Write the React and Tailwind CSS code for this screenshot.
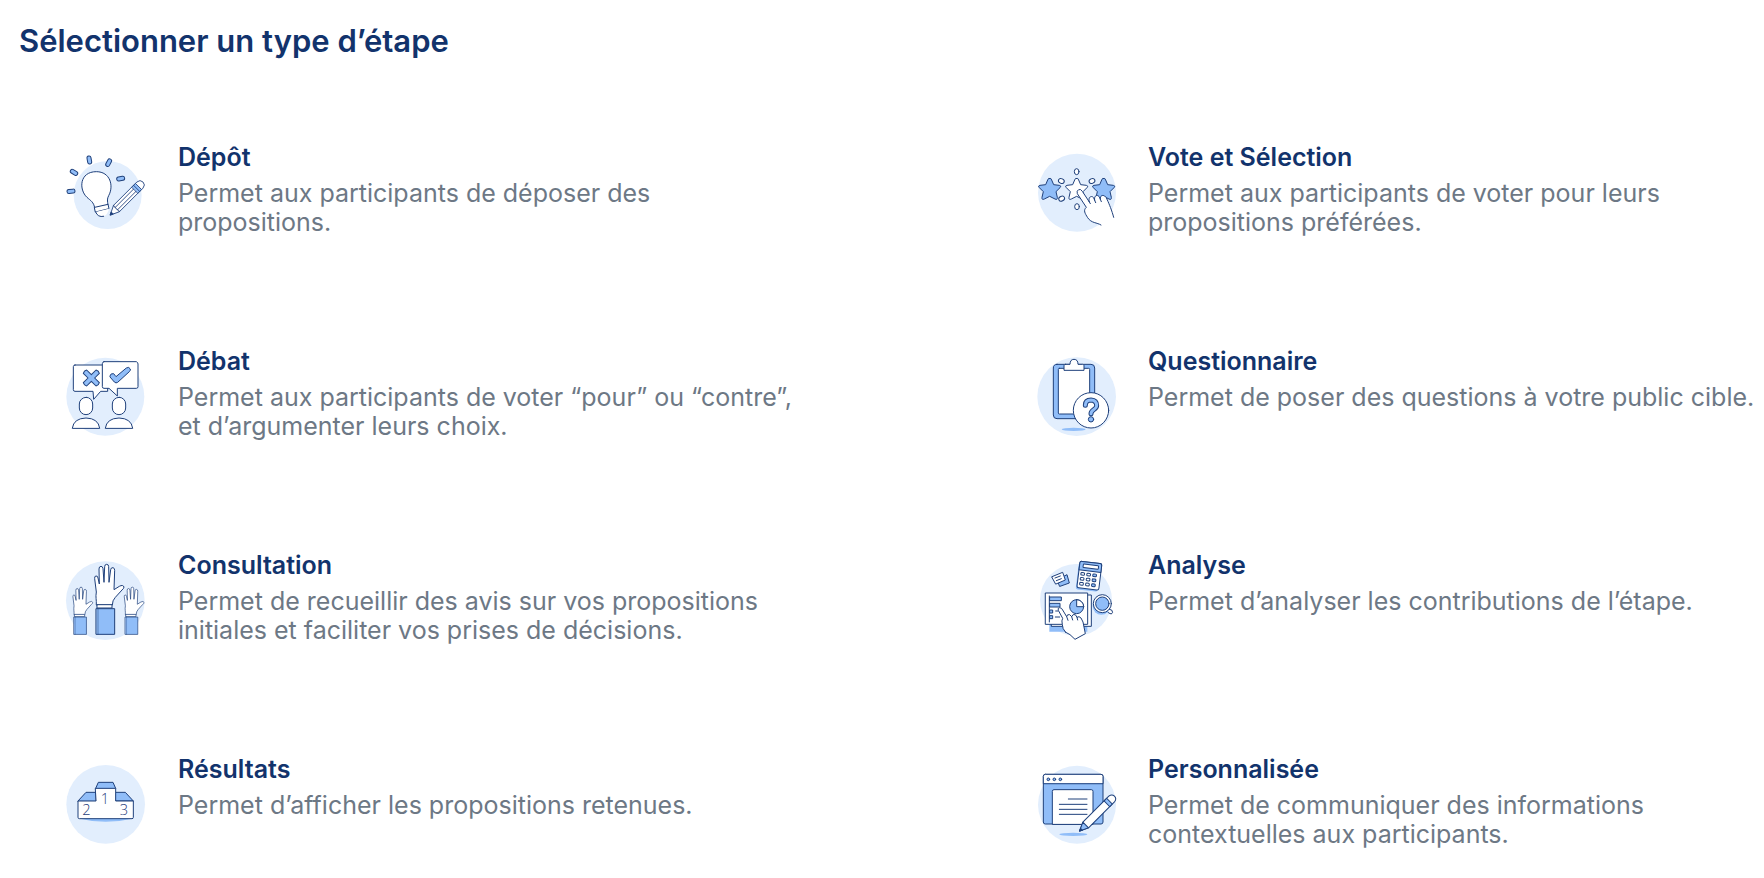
import React from "react";

const DARK = "#1f407b";
const MID = "#90bdf8";
const PALE = "#e2eefd";

function Drawing({ children }) {
  return (
    <svg
      viewBox="0 0 300 288"
      aria-hidden="true"
      className="mt-1 h-24 w-[100px] shrink-0"
      fill="#ffffff"
      stroke={DARK}
      strokeWidth="3"
      strokeLinecap="round"
      strokeLinejoin="round"
    >
      {children}
    </svg>
  );
}

const Spark = ({ x, y, angle }) => (
  <rect x={-12} y={-6} width="24" height="12" rx="6" fill={MID} transform={`translate(${x} ${y}) rotate(${angle})`} />
);

function IdeaIcon() {
  return (
    <Drawing>
      <circle cx="155" cy="153" r="102" fill={PALE} stroke="none" />
      <Spark x={100} y={48} angle={80} />
      <Spark x={158} y={56} angle={-62} />
      <Spark x={54} y={85} angle={32} />
      <Spark x={194} y={104} angle={-10} />
      <Spark x={45} y={142} angle={-6} />
      <path d="M116 191C113 174 104 170 93 160C68 137 70 83 121 83C163 83 174 126 158 155C153 164 154 171 156 182Z" />
      <path d="M116 190L156 181L159 194L119 204Z" />
      <path d="M119 204Q125 221 143 217Q155 212 159 194" stroke="none" />
      <path d="M119 204Q125 221 143 217" fill="none" />
      <g transform="translate(162 213) rotate(-45)" strokeWidth="2.5">
        <path d="M1 0L28-13H127Q140-12 140 0Q140 12 127 13H28Z" />
        <path d="M1 0L9-4V4Z" fill={DARK} />
        <path d="M28-13Q24-9 28-5Q24 0 28 5Q24 9 28 13M28-5H106M28 5H106" fill="none" />
        <path d="M106-13H121V13H106Z" fill={MID} />
        <path d="M113-13V13" />
      </g>
    </Drawing>
  );
}

const STAR = "M0-32Q4-34 6-27L12-13L29-11Q37-9 31-4L19 8L23 25Q24 34 16 30L0 22L-16 30Q-24 34-23 25L-19 8L-31-4Q-37-9-29-11L-12-13L-6-27Q-4-34 0-32Z";

function VoteIcon() {
  return (
    <Drawing>
      <circle cx="153" cy="146" r="117" fill={PALE} stroke="none" />
      <path d={STAR} transform="translate(71 135)" fill={MID} />
      <path d={STAR} transform="translate(152 135)" />
      <path d={STAR} transform="translate(233 135)" fill={MID} />
      <ellipse cx="152" cy="83" rx="7" ry="9" />
      <ellipse cx="153" cy="188" rx="7" ry="9" />
      <ellipse cx="106" cy="111" rx="9" ry="7" transform="rotate(25 106 111)" />
      <ellipse cx="198" cy="111" rx="9" ry="7" transform="rotate(-25 198 111)" />
      <ellipse cx="107" cy="164" rx="9" ry="7" transform="rotate(-25 107 164)" />
      <path
        d="M225 243C213 235 196 238 185 221C177 208 171 199 181 190L154 149Q151 140 158 137Q164 134 169 142L190 174C187 162 192 156 199 158Q204 160 206 169C204 157 210 153 216 155Q221 157 223 166C222 155 229 152 236 156Q241 159 244 168C249 179 258 200 263 220"
      />
      <path d="M190 174L193 179M206 169L209 176M223 166L226 173" fill="none" />
    </Drawing>
  );
}

const Person = ({ x }) => (
  <g transform={`translate(${x} 0)`}>
    <rect x="-20" y="148" width="40" height="52" rx="20" />
    <path d="M-41 240Q-37 211 0 210Q37 211 41 240Z" />
  </g>
);

function DebateIcon() {
  return (
    <Drawing>
      <circle cx="148" cy="146" r="117" fill={PALE} stroke="none" />
      <path d="M57 51H150Q155 51 155 56V130H134L113 154L111 130H57Q52 130 52 125V56Q52 51 57 51Z" />
      <g transform="translate(106 90) rotate(45)">
        <path
          d="M-7-27Q0-31 7-27V-7H27Q31 0 27 7H7V27Q0 31-7 27V7H-27Q-31 0-27-7H-7Z"
          fill={MID}
        />
      </g>
      <path d="M144 41H241Q246 43 246 48V116Q246 121 241 121H184V144L159 121H144Q139 121 139 116V47Q139 42 144 41Z" />
      <path
        d="M162 83Q164 75 173 77L180 86L211 60Q219 55 223 63Q224 67 220 71L185 103Q180 107 175 102L163 88Z"
        fill={MID}
      />
      <Person x={90} />
      <Person x={189} />
    </Drawing>
  );
}

function SurveyIcon() {
  return (
    <Drawing>
      <circle cx="152" cy="146" r="118" fill={PALE} stroke="none" />
      <ellipse cx="143" cy="244" rx="36" ry="5" fill={MID} stroke="none" />
      <rect x="82" y="49" width="124" height="163" rx="11" fill={MID} />
      <rect x="97" y="61" width="94" height="137" rx="3" />
      <path d="M118 49H132C132 39 136 34 144 34C152 34 156 39 156 49H170Q174 49 174 53V67H114V53Q114 49 118 49Z" />
      <circle cx="195" cy="187" r="53" />
      <path d="M178 172Q178 156 195 156Q212 157 212 173C212 185 195 184 195 197" fill="none" strokeWidth="15" />
      <path d="M178 172Q178 156 195 156Q212 157 212 173C212 185 195 184 195 197" fill="none" stroke={MID} strokeWidth="9" />
      <circle cx="195" cy="214" r="8" fill={MID} />
    </Drawing>
  );
}

const HAND =
  "M121 158C122 142 118 137 121 120L116 80Q115 72 120 72Q125 71 126 78L130 96L129 51Q129 43 135 43Q140 43 141 50L144 91L146 44Q146 37 152 37Q158 37 158 44L159 91L164 53Q165 46 171 47Q176 48 176 55L174 113L190 103Q201 97 204 105Q204 109 198 114L178 136Q169 145 169 158Z";

const RaisedHand = () => (
  <>
    <path d={HAND} />
    <path d="M124 158H168V168H124Z" />
    <path d="M121 170H176V247H121Z" fill={MID} />
    <path d="M126 170V247" strokeWidth="1.5" />
  </>
);

function HandsIcon() {
  return (
    <Drawing>
      <circle cx="148" cy="146" r="118" fill={PALE} stroke="none" />
      <g transform="translate(-27.5 80.5) scale(.675)">
        <RaisedHand />
      </g>
      <g transform="translate(126.5 80.5) scale(.675)">
        <RaisedHand />
      </g>
      <RaisedHand />
    </Drawing>
  );
}

function AnalysisIcon() {
  const keys = [0, 1, 2].flatMap((r) => [0, 1, 2].map((c) => [r, c]));
  return (
    <Drawing>
      <circle cx="150" cy="144" r="108" fill={PALE} stroke="none" />
      <g transform="rotate(7 189 72)">
        <rect x="154" y="36" width="66" height="80" rx="6" fill={MID} stroke="none" />
        <rect x="157" y="31" width="66" height="80" rx="6" />
        <path d="M157 57V37Q157 31 163 31H217Q223 31 223 37V57Z" fill={MID} />
        <rect x="168" y="38" width="46" height="11" rx="2" />
        {keys.map(([r, c]) => (
          <rect
            key={`${r}-${c}`}
            x={164 + c * 18}
            y={64 + r * 15}
            width="11"
            height="8"
            rx="3"
            fill={c === 2 ? MID : "#ffffff"}
          />
        ))}
      </g>
      <path d="M94 83L123 68L130 93L102 103Z" fill={MID} />
      <path d="M78 74L110 61L118 84L90 96Z" />
      <path d="M87 78L103 72M91 86L106 80" />
      <path d="M70 217V239H184V217" fill={MID} stroke="none" />
      <path d="M77 129H196V223H77Z" />
      <path d="M59 123H185V217H59Z" />
      <path d="M70 132V210" />
      <rect x="72" y="135" width="34" height="11" fill={MID} />
      <rect x="72" y="154" width="30" height="11" fill={MID} />
      <path d="M72 174H80V183H72ZM72 191H80V200H72Z" fill={MID} />
      <path d="M89 177H96M88 195H101" />
      <circle cx="152" cy="164" r="21" fill={MID} />
      <path d="M152 143V164H173A21 21 0 0 0 152 143Z" />
      <path d="M242 175Q248 169 257 174Q263 182 256 186Q247 186 242 175Z" />
      <circle cx="226" cy="162" r="26" fill={MID} stroke="none" />
      <circle cx="229" cy="155" r="27" />
      <circle cx="229" cy="155" r="20" fill={MID} />
      <path d="M118 240Q109 230 109 218Q106 205 110 199L97 175Q94 168 101 167Q107 167 110 174L122 194Q123 186 131 188L137 194Q140 185 148 188L153 196Q159 191 165 198L171 210L178 245L147 262Q132 245 118 240Z" />
      <path d="M122 194L126 205M137 194L140 204M153 196L155 204" fill="none" />
    </Drawing>
  );
}

function PodiumIcon() {
  return (
    <Drawing>
      <circle cx="149" cy="145" r="118" fill={PALE} stroke="none" />
      <path d="M72 188Q148 207 228 188Z" fill={MID} stroke="none" />
      <path d="M66 135L90 109H119V135ZM179 109H208L232 135H179Z" fill={MID} />
      <path d="M119 97L127 79H171L179 97Z" fill={MID} />
      <path d="M119 97H179V135H232V184Q232 188 228 188H70Q66 188 66 184V135H119Z" />
      <g
        className="font-['Open_Sans',sans-serif] text-[44px] font-light"
        fill={DARK}
        stroke="none"
        textAnchor="middle"
      >
        <text x="147" y="143">1</text>
        <text x="91" y="177">2</text>
        <text x="204" y="178">3</text>
      </g>
    </Drawing>
  );
}

function CustomIcon() {
  return (
    <Drawing>
      <circle cx="153" cy="146" r="117" fill={PALE} stroke="none" />
      <ellipse cx="142" cy="235" rx="42" ry="5" fill={MID} stroke="none" />
      <rect x="52" y="55" width="179" height="149" rx="6" fill={MID} />
      <path d="M52 82V61Q52 55 58 55H225Q231 55 231 61V82Z" />
      <circle cx="67" cy="70" r="4" fill={MID} />
      <circle cx="85" cy="70" r="4" fill={MID} />
      <circle cx="103" cy="70" r="4" fill={MID} />
      <path d="M79 204V106Q79 101 84 101H196Q201 101 201 106V204Z" />
      <path d="M127 129H183M100 145H183M100 160H183M100 175H183" />
      <g transform="translate(160 226) rotate(-45)">
        <path d="M1 0L27-12H137Q149-11 149 0Q149 11 137 12H27Z" />
        <path d="M1 0L27-12V12Z" fill={MID} />
        <path d="M1 0L9-4V4Z" fill={DARK} />
        <path d="M117-12H128V12H117Z" fill={MID} />
      </g>
    </Drawing>
  );
}

const STEPS = [
  { title: "Dépôt", text: "Permet aux participants de déposer des propositions.", Icon: IdeaIcon },
  { title: "Vote et Sélection", text: "Permet aux participants de voter pour leurs propositions préférées.", Icon: VoteIcon },
  { title: "Débat", text: "Permet aux participants de voter “pour” ou “contre”, et d’argumenter leurs choix.", Icon: DebateIcon },
  { title: "Questionnaire", text: "Permet de poser des questions à votre public cible.", Icon: SurveyIcon },
  { title: "Consultation", text: "Permet de recueillir des avis sur vos propositions initiales et faciliter vos prises de décisions.", Icon: HandsIcon },
  { title: "Analyse", text: "Permet d’analyser les contributions de l’étape.", Icon: AnalysisIcon },
  { title: "Résultats", text: "Permet d’afficher les propositions retenues.", Icon: PodiumIcon },
  { title: "Personnalisée", text: "Permet de communiquer des informations contextuelles aux participants.", Icon: CustomIcon },
];

export default function App() {
  return (
    <main className="bg-white pt-5 pl-[19px] font-[Inter,sans-serif]">
      <h1 className="text-[31px] leading-[42px] font-semibold text-[#12336c]">Sélectionner un type d’étape</h1>
      <div className="mt-[78px] grid grid-cols-2 gap-x-[195px] gap-y-[104px]">
        {STEPS.map(({ title, text, Icon }) => (
          <button key={title} type="button" className="flex items-start gap-[22px] pl-[37px] text-left">
            <Icon />
            <span className="flex min-w-0 flex-col gap-[5px]">
              <span className="text-[25px] leading-[34px] font-semibold text-[#12336c]">{title}</span>
              <span className="text-[25px] leading-[29px] text-[#6d7885]">{text}</span>
            </span>
          </button>
        ))}
      </div>
    </main>
  );
}
